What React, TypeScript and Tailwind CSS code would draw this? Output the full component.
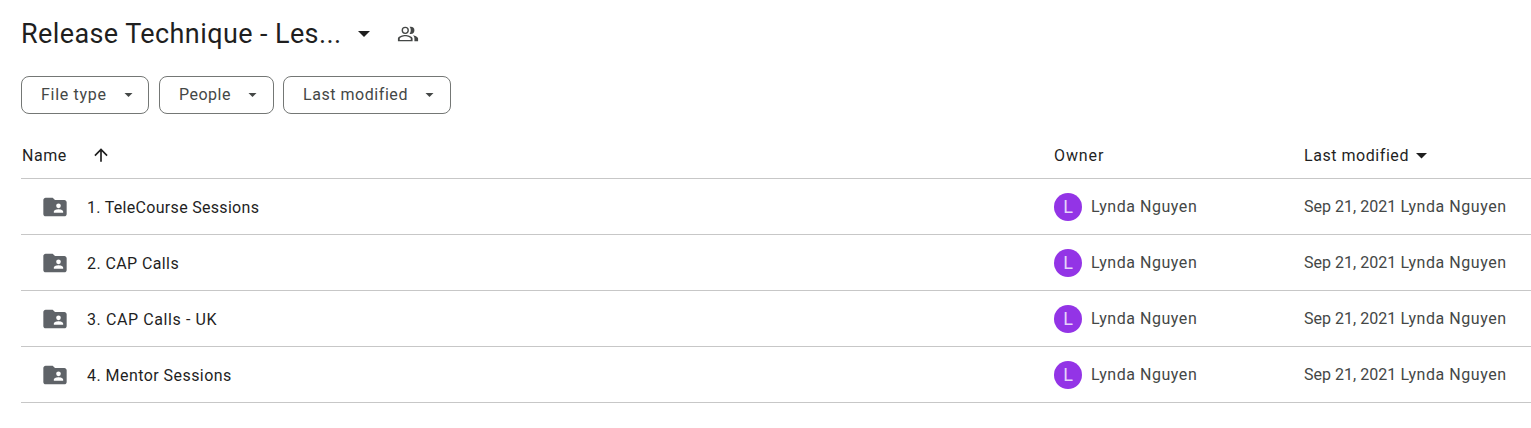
import React from 'react';

const font = "font-['Roboto','Liberation_Sans',sans-serif]";

const rows = [
  { name: '1. TeleCourse Sessions', spacing: 'tracking-[0.3px]' },
  { name: '2. CAP Calls', spacing: 'tracking-[0.4px]' },
  { name: '3. CAP Calls - UK', spacing: 'tracking-[0.6px]' },
  { name: '4. Mentor Sessions', spacing: 'tracking-[0.45px]' },
];
const filters = [
  { label: 'File type', box: 'w-[128px] tracking-[0.7px]' },
  { label: 'People', box: 'w-[115px] ml-[10px] tracking-[0.5px]' },
  { label: 'Last modified', box: 'w-[168px] ml-[9px] tracking-[0.55px]' },
];

const Caret = ({ className }: { className: string }) => (
  <svg viewBox="0 0 10 5" className={className} fill="currentColor">
    <path d="M0 0l5 5 5-5z" />
  </svg>
);

const SharedFolder = () => (
  <svg viewBox="0 0 24 24" className="w-7 h-7 text-[#5f6368]" fill="currentColor">
    <path d="M20 6h-8l-2-2H4c-1.1 0-2 .9-2 2v12c0 1.1.9 2 2 2h16c1.1 0 2-.9 2-2V8c0-1.1-.9-2-2-2zm-5 3a2 2 0 1 1 0 4 2 2 0 0 1 0-4zm4 8h-8v-1c0-1.33 2.67-2 4-2s4 .67 4 2v1z" />
  </svg>
);

const People = () => (
  <svg viewBox="0 0 24 24" className="w-[22px] h-[22px] text-[#444746]" fill="currentColor">
    <path d="M9 13c-2.67 0-8 1.34-8 4v3h16v-3c0-2.66-5.33-4-8-4zm6 5.5H3V17c0-.8 3.4-2.5 6-2.5s6 1.7 6 2.5v1.5zM9 12a4 4 0 1 0 0-8 4 4 0 0 0 0 8zm0-6.5a2.5 2.5 0 1 1 0 5 2.5 2.5 0 0 1 0-5zM15 12a4 4 0 0 0 0-8c-.5 0-.9.1-1.300.2.8 1 1.300 2.400 1.300 3.800s-.5 2.800-1.300 3.800c.4.100.8.200 1.300.200zM17.400 13.400c1.100.9 1.600 2.100 1.600 3.600v3h4v-3c0-1.800-3.200-3.100-5.600-3.600z" />
  </svg>
);

export default function App() {
  return (
    <div className={`${font} bg-white w-[1531px] h-[428px] overflow-hidden pl-[21px]`}>
      {/* Title */}
      <div className="flex items-center h-[68px]">
        <h1 className="text-[27px] text-[#1f1f1f] leading-none tracking-[0.4px] w-[324px] mt-[1px]">Release Technique - Les...</h1>
        <Caret className="w-[12px] h-[6px] ml-[13px] text-[#1f1f1f]" />
        <div className="ml-[27px]">
          <People />
        </div>
      </div>

      {/* Filters */}
      <div className="flex mt-[8px]">
        {filters.map((f) => (
          <div
            key={f.label}
            className={`${f.box} h-[38px] border border-[#747775] rounded-lg flex items-center pl-[19px] text-[16px] text-[#444746]`}
          >
            <span>{f.label}</span>
            <Caret className="w-[9px] h-[4px] ml-[17px] text-[#444746]" />
          </div>
        ))}
      </div>

      {/* Table header */}
      <div className="flex items-center h-[65px] pt-[20px] border-b border-[#c7c7c7] text-[16px] tracking-[0.55px] text-[#1f1f1f]">
        <div className="w-[1033px] flex items-center pl-[1px]">
          <span>Name</span>
          <svg viewBox="0 0 24 24" className="w-[20px] h-[20px] ml-[24px] -mt-[2px] text-[#1f1f1f]" fill="currentColor">
            <path d="M4 12l1.410 1.410L11 7.830V20h2V7.830l5.580 5.590L20 12l-8-8-8 8z" />
          </svg>
        </div>
        <div className="w-[250px] tracking-[0.9px]">Owner</div>
        <div className="flex items-center">
          <span>Last modified</span>
          <Caret className="w-[11px] h-[5.500px] ml-[7px] text-[#1f1f1f]" />
        </div>
      </div>

      {/* Rows */}
      {rows.map((row) => (
        <div key={row.name} className="flex items-center h-[56px] border-b border-[#c7c7c7] text-[16px]">
          <div className="w-[1033px] flex items-center pl-[20px] text-[#1f1f1f]">
            <SharedFolder />
            <span className={`ml-[18px] mt-[3px] ${row.spacing}`}>{row.name}</span>
          </div>
          <div className="w-[250px] flex items-center text-[#444746]">
            <div className="w-[28px] h-[28px] rounded-full bg-[#9334e6] text-[#e6d3fa] text-[18px] flex items-center justify-center">L</div>
            <span className="ml-[9px] tracking-[0.55px]">Lynda Nguyen</span>
          </div>
          <div className="text-[#444746] whitespace-nowrap tracking-[0.03px]">
            Sep 21, 2021 <span className="tracking-[0.55px]">Lynda Nguyen</span>
          </div>
        </div>
      ))}
    </div>
  );
}
